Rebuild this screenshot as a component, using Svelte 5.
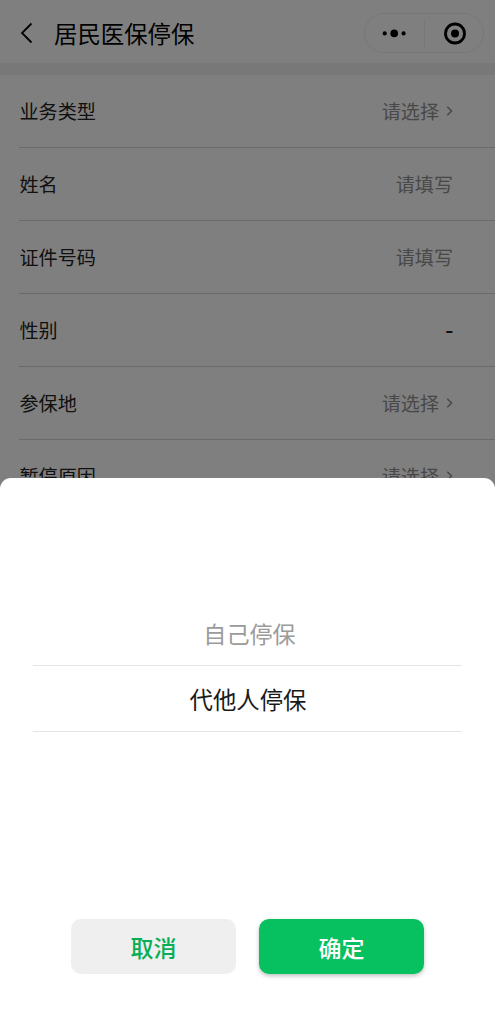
<script>
    const fields = [
        { label: '业务类型', value: '请选择', picker: true },
        { label: '姓名', value: '请填写' },
        { label: '证件号码', value: '请填写' },
        { label: '性别', value: '-', readonly: true },
        { label: '参保地', value: '请选择', picker: true },
        { label: '暂停原因', value: '请选择', picker: true }
    ];
    const options = ['自己停保', '代他人停保'];

    let selected = $state(1);
</script>

<div class="page">
    <header class="navbar">
        <svg class="back" width="14" height="22" viewBox="0 0 14 22">
            <path d="M11.5 1.5 2 11l9.5 9.5" fill="none" stroke="#000" stroke-width="1.8" />
        </svg>
        <h1>居民医保停保</h1>
        <div class="capsule">
            <svg width="24" height="10" viewBox="0 0 24 10">
                <circle cx="2.7" cy="5.4" r="2.1" />
                <circle cx="12.2" cy="5.4" r="3.8" />
                <circle cx="21.6" cy="5.4" r="2.1" />
            </svg>
            <span class="divider"></span>
            <svg width="24" height="24" viewBox="0 0 24 24">
                <circle cx="12" cy="12.5" r="9.5" fill="none" stroke="#000" stroke-width="2.8" />
                <circle cx="12" cy="12.5" r="4" />
            </svg>
        </div>
    </header>

    <div class="form">
        {#each fields as field}
            <div class="row">
                <span>{field.label}</span>
                <span class="value" class:readonly={field.readonly}>
                    {field.value}
                    {#if field.picker}
                        <svg width="7" height="10" viewBox="0 0 7 10">
                            <path d="M1.3 .8 5.5 5 1.3 9.2" fill="none" stroke="currentColor" stroke-width="1.5" />
                        </svg>
                    {/if}
                </span>
            </div>
        {/each}
    </div>

    <div class="mask"></div>

    <div class="sheet">
        <div class="options">
            {#each options as option, i}
                <button class="option" class:active={i === selected} onclick={() => (selected = i)}>{option}</button>
            {/each}
        </div>
        <div class="actions">
            <button class="btn cancel">取消</button>
            <button class="btn confirm">确定</button>
        </div>
    </div>
</div>

<style>
    :global(body) {
        margin: 0;
    }

    .page {
        position: relative;
        height: 1018px;
        overflow: hidden;
        background: #fff;
        color: #000;
        font-family: "Noto Sans CJK SC", sans-serif;
    }

    .navbar {
        display: flex;
        align-items: center;
        box-sizing: border-box;
        height: 75px;
        padding: 0 11px 7px 20px;
        border-bottom: 12px solid #f1f1f1;
    }

    h1 {
        flex: 1;
        margin: 10px 0 0 20px;
        font-size: 23.4px;
        line-height: 34px;
        font-weight: 400;
    }

    .back {
        margin-top: 10px;
    }

    .capsule {
        display: flex;
        align-items: center;
        justify-content: space-between;
        box-sizing: border-box;
        width: 120px;
        height: 40px;
        margin-top: 10px;
        padding: 0 16px 0 17px;
        border: 1px solid #eee;
        border-radius: 20px;
    }

    .divider {
        width: 1px;
        height: 28px;
        background: #f0f0f0;
    }

    .form {
        padding-left: 19px;
    }

    .row {
        display: flex;
        align-items: center;
        justify-content: space-between;
        box-sizing: border-box;
        height: 73px;
        padding: 0 42px 0 0.5px;
        border-bottom: 1px solid #d4d4d4;
        color: #222;
        font-size: 19.1px;
        line-height: 28px;
    }

    .value {
        display: flex;
        align-items: center;
        gap: 7px;
        color: #909090;
    }

    .value.readonly {
        padding-top: 2px;
        color: #222;
        font-family: Roboto, sans-serif;
        font-size: 26px;
    }

    .mask {
        position: absolute;
        inset: 0;
        background: rgba(0, 0, 0, 0.5);
    }

    .sheet {
        position: absolute;
        left: 0;
        right: 0;
        bottom: 0;
        display: flex;
        flex-direction: column;
        justify-content: space-between;
        box-sizing: border-box;
        height: 540px;
        padding: 122px 0 44px;
        border-radius: 11px 11px 0 0;
        background: #fff;
    }

    .options {
        display: flex;
        flex-direction: column;
        margin: 0 33px;
    }

    button {
        padding: 0;
        border: 0;
        background: none;
        font-family: inherit;
        font-size: 23.4px;
    }

    .option {
        height: 66px;
        padding: 0 0 0 4px;
        border-bottom: 1px solid #e5e5e5;
        color: #9b9b9b;
        font-size: 23.1px;
    }

    .option.active {
        padding: 1px 0 0 1px;
        color: #1a1a1a;
        font-size: 23.4px;
    }

    .actions {
        display: flex;
        justify-content: center;
        gap: 23px;
    }

    .btn {
        width: 165px;
        height: 55px;
        border-radius: 10px;
        font-size: 23px;
        font-weight: 500;
    }

    .cancel {
        background: #efefef;
        color: #07ae56;
    }

    .confirm {
        background: #07c160;
        color: #fff;
        box-shadow: 0 2px 4px rgba(0, 0, 0, 0.25);
    }
</style>
